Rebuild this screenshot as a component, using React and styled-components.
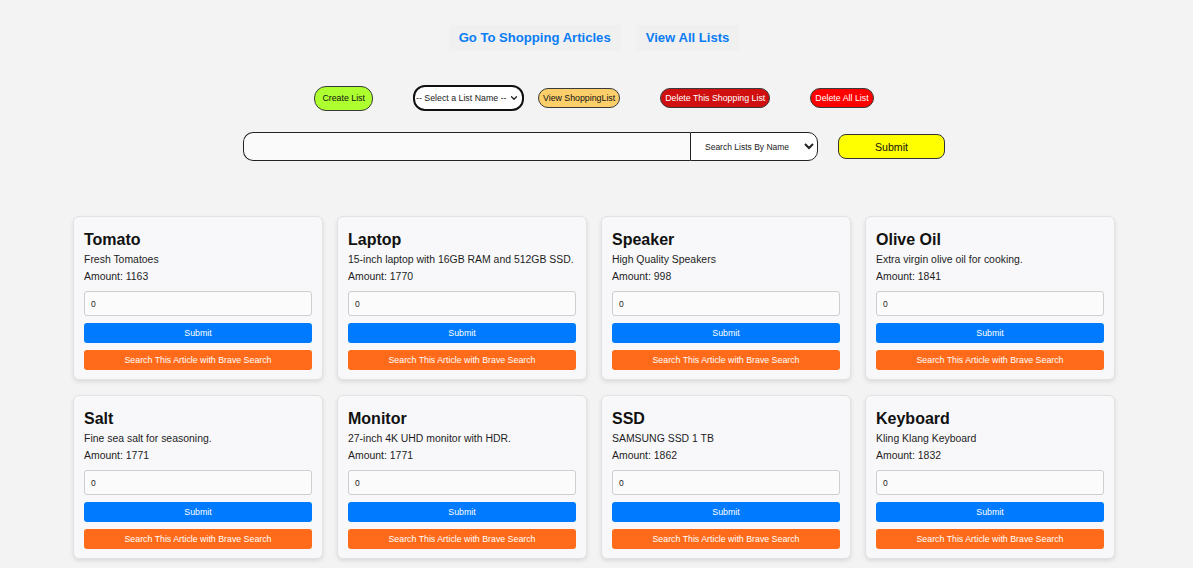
import React from "react";
import styled, { createGlobalStyle } from "styled-components";
import { ChevronDown } from "lucide-react";

const GlobalStyle = createGlobalStyle`
  body {
    margin: 0;
    background: #f3f3f3;
    font-family: "Liberation Sans", Arial, sans-serif;
  }
`;

const Page = styled.div`
  display: flex;
  flex-direction: column;
  align-items: center;
  padding: 25px 5px 0 0;
`;

const NavBar = styled.nav`
  display: flex;
  gap: 15px;
  justify-content: center;
`;

const NavLink = styled.a`
  display: block;
  padding: 6px 10px;
  background: #f0f0f0;
  color: #0a7cf5;
  font-size: 13.1px;
  font-weight: bold;
  line-height: 14px;
  text-decoration: none;
  cursor: pointer;
`;

const ControlRow = styled.div`
  display: flex;
  align-items: center;
  gap: 40px;
  margin-top: 34px;
`;

const SelectGroup = styled.div`
  display: flex;
  align-items: center;
  gap: 14px;
`;

const PillButton = styled.button`
  height: ${(p) => p.$h || 20}px;
  padding: 0 ${(p) => p.$px || 4}px;
  border: 1.5px solid #3a3a3a;
  border-radius: 12px;
  background: ${(p) => p.$bg};
  color: ${(p) => p.$color || "#111"};
  font-family: "Liberation Sans", Arial, sans-serif;
  font-size: 8.8px;
  cursor: pointer;
`;

const SelectWrap = styled.div`
  position: relative;
  display: flex;
  align-items: center;
`;

const ListSelect = styled.select`
  appearance: none;
  box-sizing: border-box;
  width: 111px;
  height: 26px;
  border: 2px solid #111;
  border-radius: 12px;
  background: #fff;
  color: #222;
  font-family: "Liberation Sans", Arial, sans-serif;
  font-size: 8.8px;
  padding: 0 0 0 1px;
`;

const Chevron = styled(ChevronDown)`
  position: absolute;
  right: 5px;
  pointer-events: none;
  color: #222;
`;

const SearchRow = styled.div`
  display: flex;
  align-items: center;
  margin-top: 21px;
`;

const SearchInput = styled.input`
  box-sizing: border-box;
  width: 447px;
  height: 29px;
  border: 1.5px solid #222;
  border-right: none;
  border-radius: 10px 0 0 10px;
  background: #fafafa;
  outline: none;
`;

const SearchSelect = styled.select`
  box-sizing: border-box;
  width: 128px;
  height: 29px;
  border: 1.5px solid #222;
  border-radius: 0 10px 10px 0;
  background: #fff;
  color: #222;
  font-family: "Liberation Sans", Arial, sans-serif;
  font-size: 8.5px;
  padding: 0 10px;
`;

const YellowSubmit = styled.button`
  width: 107px;
  height: 25px;
  margin-left: 20px;
  border: 1.5px solid #333;
  border-radius: 8px;
  background: #ffff00;
  color: #111;
  font-family: "Liberation Sans", Arial, sans-serif;
  font-size: 10.6px;
  cursor: pointer;
`;

const Grid = styled.div`
  display: grid;
  grid-template-columns: repeat(4, 250px);
  column-gap: 14px;
  row-gap: 15px;
  margin-top: 55px;
  padding-bottom: 20px;
`;

const Card = styled.div`
  box-sizing: border-box;
  height: 164px;
  padding: 14px 10px 11px;
  background: #f8f8fa;
  border: 1px solid #e2e2e2;
  border-radius: 6px;
  box-shadow: 0 2px 4px rgba(0, 0, 0, 0.1);
  display: flex;
  flex-direction: column;
`;

const Title = styled.h3`
  margin: 0;
  font-size: 16px;
  line-height: 18px;
  font-weight: bold;
  color: #111;
`;

const Text = styled.p`
  margin: 5px 0 0;
  font-size: 10.45px;
  line-height: 12px;
  color: #1e1e1e;
  white-space: nowrap;
`;

const AmountInput = styled.input`
  flex-shrink: 0;
  box-sizing: border-box;
  width: 100%;
  height: 25px;
  margin-top: 8px;
  padding: 0 6px;
  border: 1px solid #cfcfcf;
  border-radius: 3px;
  background: #fbfbfb;
  font-family: "Liberation Sans", Arial, sans-serif;
  font-size: 8.5px;
  color: #222;
`;

const CardButton = styled.button`
  flex-shrink: 0;
  width: 100%;
  height: 20px;
  margin-top: 7px;
  border: none;
  border-radius: 3px;
  background: ${(p) => p.$bg};
  color: #fff;
  font-family: "Liberation Sans", Arial, sans-serif;
  font-size: 8.8px;
  cursor: pointer;
`;

const articles = [
  { name: "Tomato", desc: "Fresh Tomatoes", amount: 1163 },
  { name: "Laptop", desc: "15-inch laptop with 16GB RAM and 512GB SSD.", amount: 1770 },
  { name: "Speaker", desc: "High Quality Speakers", amount: 998 },
  { name: "Olive Oil", desc: "Extra virgin olive oil for cooking.", amount: 1841 },
  { name: "Salt", desc: "Fine sea salt for seasoning.", amount: 1771 },
  { name: "Monitor", desc: "27-inch 4K UHD monitor with HDR.", amount: 1771 },
  { name: "SSD", desc: "SAMSUNG SSD 1 TB", amount: 1862 },
  { name: "Keyboard", desc: "Kling Klang Keyboard", amount: 1832 },
];

const App = () => {
  return (
    <>
      <GlobalStyle />
      <Page>
        <NavBar>
          <NavLink>Go To Shopping Articles</NavLink>
          <NavLink>View All Lists</NavLink>
        </NavBar>

        <ControlRow>
          <PillButton $bg="#adff2f" $h={25} $px={7}>
            Create List
          </PillButton>
          <SelectGroup>
            <SelectWrap>
              <ListSelect defaultValue="">
                <option value="">-- Select a List Name --</option>
              </ListSelect>
              <Chevron size={10} strokeWidth={3} />
            </SelectWrap>
            <PillButton $bg="#fccf6b">View ShoppingList</PillButton>
          </SelectGroup>
          <PillButton $bg="#d01010" $color="#fff">
            Delete This Shopping List
          </PillButton>
          <PillButton $bg="#ff0000" $color="#fff">
            Delete All List
          </PillButton>
        </ControlRow>

        <SearchRow>
          <SearchInput type="text" />
          <SearchSelect defaultValue="name">
            <option value="name">Search Lists By Name</option>
          </SearchSelect>
          <YellowSubmit>Submit</YellowSubmit>
        </SearchRow>

        <Grid>
          {articles.map((a) => (
            <Card key={a.name}>
              <Title>{a.name}</Title>
              <Text>{a.desc}</Text>
              <Text>Amount: {a.amount}</Text>
              <AmountInput type="number" defaultValue={0} />
              <CardButton $bg="#007bff">Submit</CardButton>
              <CardButton $bg="#ff6b1a">Search This Article with Brave Search</CardButton>
            </Card>
          ))}
        </Grid>
      </Page>
    </>
  );
};

export default App;
